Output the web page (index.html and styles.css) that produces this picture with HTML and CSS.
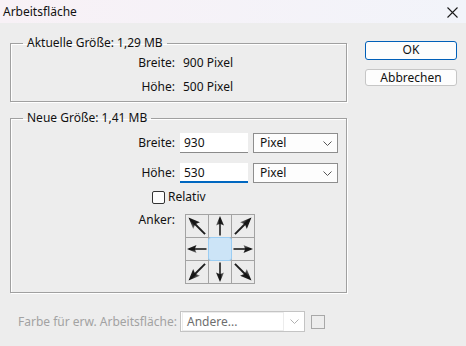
FILE: index.html
```html
<!DOCTYPE html>
<html lang="de">
<head>
    <meta charset="UTF-8">
    <title>Arbeitsfläche</title>
    <link rel="stylesheet" href="styles.css">
</head>
<body>
    <div class="titlebar">
        <span class="title">Arbeitsfläche</span>
        <svg class="close" width="11" height="11" viewBox="0 0 11 11">
            <path d="M0.5 0.5 L10.5 10.5 M10.5 0.5 L0.5 10.5" stroke="#1b1b1b" stroke-width="1.1"/>
        </svg>
    </div>
    <div class="dialog">
        <div class="main">
            <fieldset class="group current">
                <legend>Aktuelle Größe: 1,29 MB</legend>
                <div class="info-row"><span class="lbl">Breite:</span><span>900 Pixel</span></div>
                <div class="info-row"><span class="lbl">Höhe:</span><span>500 Pixel</span></div>
            </fieldset>
            <fieldset class="group new">
                <legend>Neue Größe: 1,41 MB</legend>
                <div class="field-row">
                    <span class="lbl">Breite:</span>
                    <div class="input">930</div>
                    <div class="select">Pixel
                        <svg class="chev" width="9" height="5" viewBox="0 0 9 5"><path d="M0.5 0.5 L4.5 4.5 L8.5 0.5" fill="none" stroke="#555" stroke-width="1"/></svg>
                    </div>
                </div>
                <div class="field-row">
                    <span class="lbl">Höhe:</span>
                    <div class="input focused">530</div>
                    <div class="select">Pixel
                        <svg class="chev" width="9" height="5" viewBox="0 0 9 5"><path d="M0.5 0.5 L4.5 4.5 L8.5 0.5" fill="none" stroke="#555" stroke-width="1"/></svg>
                    </div>
                </div>
                <div class="check-row"><span class="box"></span>Relativ</div>
                <div class="anchor-row">
                    <span class="lbl">Anker:</span>
                    <div class="anchor">
                        <div class="cell"><svg class="arrow r-nw" viewBox="0 0 22 22"><use href="#arr"/></svg></div>
                        <div class="cell"><svg class="arrow r-n" viewBox="0 0 22 22"><use href="#arr"/></svg></div>
                        <div class="cell"><svg class="arrow r-ne" viewBox="0 0 22 22"><use href="#arr"/></svg></div>
                        <div class="cell"><svg class="arrow r-w" viewBox="0 0 22 22"><use href="#arr"/></svg></div>
                        <div class="cell center"></div>
                        <div class="cell"><svg class="arrow r-e" viewBox="0 0 22 22"><use href="#arr"/></svg></div>
                        <div class="cell"><svg class="arrow r-sw" viewBox="0 0 22 22"><use href="#arr"/></svg></div>
                        <div class="cell"><svg class="arrow r-s" viewBox="0 0 22 22"><use href="#arr"/></svg></div>
                        <div class="cell"><svg class="arrow r-se" viewBox="0 0 22 22"><use href="#arr"/></svg></div>
                    </div>
                </div>
            </fieldset>
            <div class="color-row">
                <span class="muted">Farbe für erw. Arbeitsfläche:</span>
                <div class="select wide"><span class="sel-text">Andere...</span>
                    <svg class="chev" width="9" height="5" viewBox="0 0 9 5"><path d="M0.5 0.5 L4.5 4.5 L8.5 0.5" fill="none" stroke="#b0b0b0" stroke-width="1"/></svg>
                </div>
                <span class="swatch"></span>
            </div>
        </div>
        <div class="buttons">
            <div class="btn default">OK</div>
            <div class="btn">Abbrechen</div>
        </div>
    </div>

    <!-- shared arrow shape, pointing up -->
    <svg width="0" height="0" style="position:absolute">
        <defs>
            <linearGradient id="shade" x1="0" y1="0" x2="1" y2="0">
                <stop offset="0" stop-color="#888"/>
                <stop offset="0.45" stop-color="#111"/>
                <stop offset="1" stop-color="#2a2a2a"/>
            </linearGradient>
            <g id="arr">
                <rect x="10.2" y="8" width="1.6" height="12.5" fill="#1e1e1e"/>
                <path d="M11 1 L15 10.5 L11 8.8 L7 10.5 Z" fill="url(#shade)"/>
            </g>
        </defs>
    </svg>
</body>
</html>
```

FILE: styles.css
```css
body {
    margin: 0;
    background-color: #ededed;
    font-family: "Noto Sans", sans-serif;
    font-size: 12px;
    line-height: 16px;
    color: #111;
}
.titlebar {
    height: 23px;
    display: flex;
    align-items: center;
    justify-content: space-between;
    padding: 0 8px 0 3px;
    background: linear-gradient(to right, #f8f1f6, #f2f4fa);
}
.title {
    font-size: 12px;
}
.close {
    margin-top: 1px;
}
.dialog {
    display: flex;
    padding: 12px 0 0 10px;
}
.main {
    width: 337px;
}
.group {
    margin: 0;
    padding: 0;
    min-width: 0;
    border: 1px solid #a0a0a0;
    box-shadow: 1px 1px 0 #fff, inset 1px 1px 0 #fff;
}
.group legend {
    margin-left: 12px;
    padding: 0 4px;
    line-height: 16px;
}
.current {
    padding: 4px 0 6px;
}
.info-row {
    display: grid;
    grid-template-columns: 164px auto;
    column-gap: 8px;
    margin-bottom: 8px;
}
.info-row:last-child {
    margin-bottom: 0;
}
.lbl {
    text-align: right;
}
.new {
    margin-top: 8px;
    padding: 7px 0 8px;
}
.field-row {
    display: grid;
    grid-template-columns: 164px 68px 85px;
    column-gap: 5px;
    align-items: center;
    height: 20px;
    margin-bottom: 10px;
}
.input {
    height: 20px;
    box-sizing: border-box;
    padding: 1px 4px 0;
    background: #fff;
    border-bottom: 1px solid #8a8a8a;
    line-height: 18px;
}
.input.focused {
    border-bottom: 2px solid #0067c0;
}
.select {
    height: 20px;
    box-sizing: border-box;
    display: flex;
    align-items: center;
    justify-content: space-between;
    padding: 0 5px 0 6px;
    background: #fdfdfd;
    border: 1px solid #8e8e8e;
}
.check-row {
    display: flex;
    align-items: center;
    margin: -4px 0 0 141px;
    height: 16px;
}
.box {
    width: 11px;
    height: 11px;
    border: 1px solid #333;
    border-radius: 2px;
    background: #fdfdfd;
    margin-right: 3px;
}
.anchor-row {
    display: grid;
    grid-template-columns: 164px 70px;
    column-gap: 10px;
    margin-top: 9px;
}
.anchor-row .lbl {
    margin-top: -2px;
}
.anchor {
    display: grid;
    grid-template-columns: repeat(3, 22px);
    grid-template-rows: repeat(3, 22px);
    gap: 1px;
    padding: 1px;
    background: #a3a3a3;
}
.cell {
    background: #ececec;
    display: flex;
    align-items: center;
    justify-content: center;
}
.cell.center {
    margin: -1px;
    background: #cce4f7;
    border: 1px solid #9bcdf3;
    border-radius: 3px;
}
.arrow {
    width: 22px;
    height: 22px;
}
.r-n { transform: rotate(0deg); }
.r-ne { transform: rotate(45deg) scale(1.2); }
.r-e { transform: rotate(90deg); }
.r-se { transform: rotate(135deg) scale(1.2); }
.r-s { transform: rotate(180deg); }
.r-sw { transform: rotate(225deg) scale(1.2); }
.r-w { transform: rotate(270deg); }
.r-nw { transform: rotate(315deg) scale(1.2); }
.color-row {
    display: flex;
    align-items: center;
    margin-top: 18px;
    padding-left: 8px;
}
.muted {
    color: #a2a2a2;
    width: 162px;
}
.select.wide {
    width: 125px;
    height: 21px;
    padding: 1px 5px 1px 1px;
    border-color: #c4c4c4;
    background: #fff;
}
.sel-text {
    flex: 1;
    height: 17px;
    margin-right: 6px;
    padding-left: 4px;
    border: 1px solid #ececec;
    color: #6e6e6e;
    line-height: 17px;
}
.swatch {
    width: 12px;
    height: 12px;
    margin-left: 6px;
    border: 1px solid #a8a8a8;
}
.buttons {
    margin-left: 18px;
    padding-top: 6px;
    width: 92px;
}
.btn {
    box-sizing: border-box;
    height: 17px;
    line-height: 15px;
    margin-bottom: 10px;
    text-align: center;
    background: #fdfdfd;
    border: 1px solid #c6c6c6;
    border-radius: 3px;
}
.btn.default {
    height: 19px;
    line-height: 16px;
    border: 1.5px solid #005fb8;
    margin-bottom: 9px;
}
```
